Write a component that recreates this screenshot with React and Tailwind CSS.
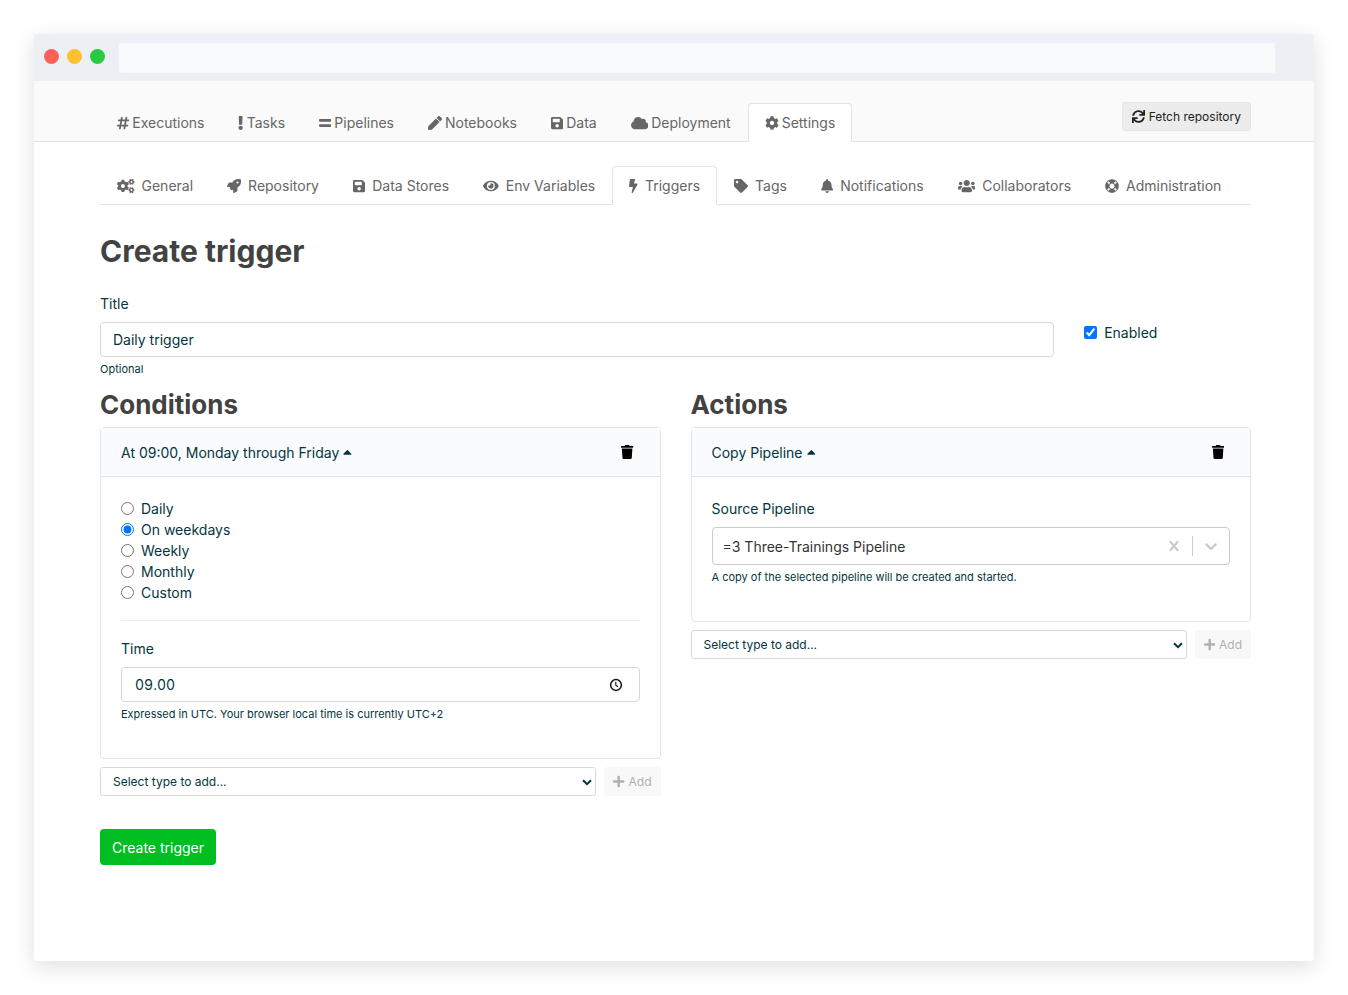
import React, { useState } from "react";
import clsx from "clsx";
import { IconContext } from "react-icons";
import {
  FaBell,
  FaBolt,
  FaCaretUp,
  FaCloud,
  FaCog,
  FaCogs,
  FaEquals,
  FaExclamation,
  FaEye,
  FaHashtag,
  FaLifeRing,
  FaPen,
  FaPlus,
  FaRocket,
  FaSave,
  FaSync,
  FaTag,
  FaTrash,
  FaUsers,
} from "react-icons/fa";

const mainTabs = [
  { name: "Executions", icon: FaHashtag },
  { name: "Tasks", icon: FaExclamation },
  { name: "Pipelines", icon: FaEquals },
  { name: "Notebooks", icon: FaPen },
  { name: "Data", icon: FaSave },
  { name: "Deployment", icon: FaCloud },
  { name: "Settings", icon: FaCog },
];

const settingsTabs = [
  { name: "General", icon: FaCogs },
  { name: "Repository", icon: FaRocket },
  { name: "Data Stores", icon: FaSave },
  { name: "Env Variables", icon: FaEye },
  { name: "Triggers", icon: FaBolt },
  { name: "Tags", icon: FaTag },
  { name: "Notifications", icon: FaBell },
  { name: "Collaborators", icon: FaUsers },
  { name: "Administration", icon: FaLifeRing },
];

const schedules = ["Daily", "On weekdays", "Weekly", "Monthly", "Custom"];

// size "auto" lets every icon keep the width of its own viewBox
const iconSettings = { size: "auto" };

function Tabs({ tabs, active, gap, label }) {
  return (
    <nav aria-label={label} className="-mb-px flex">
      {tabs.map(({ name, icon: Icon }) => (
        <a
          key={name}
          href="#"
          className={clsx(
            "flex h-[39px] items-center rounded-t border px-4 whitespace-nowrap text-[#666]",
            gap,
            name === active
              ? "border-[#dfe6ea] border-b-white bg-white"
              : "border-transparent"
          )}
        >
          <Icon className="h-3.5 w-auto" aria-hidden="true" />
          {name}
        </a>
      ))}
    </nav>
  );
}

function ChevronIcon({ className }) {
  return (
    <svg viewBox="0 0 10 7" className={className} aria-hidden="true">
      <path d="M1 1.2 5 5.2 9 1.2" fill="none" stroke="currentColor" strokeWidth="2" />
    </svg>
  );
}

function ClockIcon({ className }) {
  return (
    <svg viewBox="0 0 14 14" className={className} aria-hidden="true">
      <circle cx="7" cy="7" r="5.4" fill="none" stroke="#111" strokeWidth="1.5" />
      <path d="M6.8 3.8v3.4l2.2 1.6" fill="none" stroke="#111" strokeWidth="1.1" />
    </svg>
  );
}

function Card({ title, children }) {
  return (
    <section className="rounded border border-[#e3e6e8] bg-white">
      <header className="flex h-[49px] items-center justify-between border-b border-[#dfe3e6] bg-[#fafbfd] px-5">
        <button type="button" className="flex items-center gap-1">
          {title}
          <FaCaretUp className="h-3.5 w-auto" aria-hidden="true" />
        </button>
        <button type="button" aria-label="Delete" className="px-1.5 text-black">
          <FaTrash className="h-3.5 w-auto" />
        </button>
      </header>
      <div className="px-5 pt-[21px] pb-5">{children}</div>
    </section>
  );
}

function AddRow({ label }) {
  return (
    <div className="mt-2 flex gap-2 text-xs">
      <div className="relative flex-1">
        <select
          aria-label={label}
          className="h-[29px] w-full appearance-none rounded-[3px] border border-[#d3dade] bg-white px-3"
        >
          <option>Select type to add...</option>
        </select>
        <ChevronIcon className="pointer-events-none absolute top-3 right-1 h-[7px] w-2.5" />
      </div>
      <button
        type="button"
        disabled
        className="flex h-[29px] items-center gap-1 rounded-[3px] bg-[#f8f8f8] px-[9px] text-[#b0b0b0]"
      >
        <FaPlus className="h-[13px] w-auto" aria-hidden="true" />
        Add
      </button>
    </div>
  );
}

function App() {
  const [title, setTitle] = useState("Daily trigger");
  const [enabled, setEnabled] = useState(true);
  const [schedule, setSchedule] = useState("On weekdays");
  const [time, setTime] = useState("09.00");
  const [pipeline, setPipeline] = useState("=3 Three-Trainings Pipeline");

  return (
    <IconContext.Provider value={iconSettings}>
      <div className="min-h-screen bg-white p-[34px] font-['Inter',sans-serif] text-sm leading-[21px] text-[#04363d]">
        <div className="rounded-[3px] bg-white shadow-[0_6px_22px_rgba(0,0,0,0.13)]">
          {/* Browser bar */}
          <div className="flex h-[47px] items-center rounded-t-[3px] bg-[#ecf0f5] pr-[39px] pl-2.5">
            <div className="mb-0.5 flex gap-2">
              <span className="size-[15px] rounded-full bg-[#ff6058]" />
              <span className="size-[15px] rounded-full bg-[#ffc02e]" />
              <span className="size-[15px] rounded-full bg-[#28ca41]" />
            </div>
            <div className="ml-3.5 h-[30px] flex-1 rounded-[2px] bg-[#f9fafc]" />
          </div>

          {/* Project navigation */}
          <div className="flex items-end justify-between border-b border-[#dfe3e6] bg-[#fafafa] pt-[21px] pr-[63px] pl-[66px]">
            <Tabs tabs={mainTabs} active="Settings" gap="gap-[3px]" label="Project" />
            <button
              type="button"
              className="mb-2.5 flex h-[29px] items-center gap-1 rounded-[3px] border border-[#e6e6e6] bg-[#ececec] px-[9px] text-xs text-[#222]"
            >
              <FaSync className="h-[13px] w-auto" aria-hidden="true" />
              Fetch repository
            </button>
          </div>

          <main className="pt-6 pr-[63px] pb-24 pl-[66px]">
            <div className="border-b border-[#dfe3e6]">
              <Tabs tabs={settingsTabs} active="Triggers" gap="gap-[7px]" label="Settings" />
            </div>

            <form onSubmit={(e) => e.preventDefault()}>
              <h1 className="mt-7 text-3xl leading-9 font-bold text-[#424242]">
                Create trigger
              </h1>

              <div className="mt-6 grid grid-cols-12 gap-x-[30px]">
                <div className="col-span-10">
                  <label htmlFor="title" className="block">
                    Title
                  </label>
                  <input
                    id="title"
                    type="text"
                    value={title}
                    onChange={(e) => setTitle(e.target.value)}
                    className="mt-2 block h-[35px] w-full rounded border border-[#d3dade] px-3"
                  />
                  <p className="mt-[3px] text-[11px] leading-[18px]">Optional</p>
                </div>
                <div className="col-span-2 pt-[29px]">
                  <label className="flex items-center gap-[7px]">
                    <input
                      type="checkbox"
                      checked={enabled}
                      onChange={(e) => setEnabled(e.target.checked)}
                      className="size-[13px] accent-[#0075ff]"
                    />
                    Enabled
                  </label>
                </div>
              </div>

              <div className="mt-3 grid grid-cols-2 gap-x-[30px]">
                <div>
                  <h2 className="mb-2 text-[26px] leading-[29px] font-bold text-[#424242]">
                    Conditions
                  </h2>
                  <Card title="At 09:00, Monday through Friday">
                    <fieldset aria-label="Schedule">
                      {schedules.map((name) => (
                        <label key={name} className="flex items-center gap-[7px]">
                          <input
                            type="radio"
                            name="schedule"
                            checked={schedule === name}
                            onChange={() => setSchedule(name)}
                            className="size-[13px] accent-[#0075ff]"
                          />
                          {name}
                        </label>
                      ))}
                    </fieldset>
                    <hr className="my-[17px] border-[#e8eaec]" />
                    <label htmlFor="time" className="block">
                      Time
                    </label>
                    <div className="relative mt-2">
                      <input
                        id="time"
                        type="text"
                        value={time}
                        onChange={(e) => setTime(e.target.value)}
                        className="block h-[35px] w-full rounded border border-[#d3dade] px-[13px] tabular-nums"
                      />
                      <ClockIcon className="pointer-events-none absolute top-[11px] right-[17px] size-3.5" />
                    </div>
                    <p className="mt-[3px] mb-[15px] text-[11px] leading-[18px]">
                      Expressed in UTC. Your browser local time is currently UTC+2
                    </p>
                  </Card>
                  <AddRow label="Condition type" />
                </div>

                <div>
                  <h2 className="mb-2 text-[26px] leading-[29px] font-bold text-[#424242]">
                    Actions
                  </h2>
                  <Card title="Copy Pipeline">
                    <label htmlFor="pipeline" className="block">
                      Source Pipeline
                    </label>
                    <div className="mt-2 flex h-[38px] items-center rounded border border-[#ccc] bg-white text-[#ccc]">
                      <input
                        id="pipeline"
                        role="combobox"
                        aria-expanded="false"
                        value={pipeline}
                        onChange={(e) => setPipeline(e.target.value)}
                        className="min-w-0 flex-1 px-2.5 text-[#333]"
                      />
                      <button
                        type="button"
                        aria-label="Clear"
                        onClick={() => setPipeline("")}
                        className="px-2"
                      >
                        <svg viewBox="0 0 20 20" className="size-5 fill-current">
                          <path d="M14.348 14.849c-0.469 0.469-1.229 0.469-1.697 0l-2.651-3.030-2.651 3.029c-0.469 0.469-1.229 0.469-1.697 0-0.469-0.469-0.469-1.229 0-1.697l2.758-3.15-2.759-3.152c-0.469-0.469-0.469-1.228 0-1.697s1.228-0.469 1.697 0l2.652 3.031 2.651-3.031c0.469-0.469 1.228-0.469 1.697 0s0.469 1.229 0 1.697l-2.758 3.152 2.758 3.15c0.469 0.469 0.469 1.229 0 1.698z" />
                        </svg>
                      </button>
                      <span className="h-5 w-px bg-[#ccc]" />
                      <button type="button" aria-label="Open" className="px-2">
                        <svg viewBox="0 0 20 20" className="size-5 fill-current">
                          <path d="M4.516 7.548c0.436-0.446 1.043-0.481 1.576 0l3.908 3.747 3.908-3.747c0.533-0.481 1.141-0.446 1.574 0 0.436 0.445 0.408 1.197 0 1.615-0.406 0.418-4.695 4.502-4.695 4.502-0.217 0.223-0.502 0.335-0.787 0.335s-0.57-0.112-0.789-0.335c0 0-4.287-4.084-4.695-4.502s-0.436-1.17 0-1.615z" />
                        </svg>
                      </button>
                    </div>
                    <p className="mt-[3px] mb-[15px] text-[11px] leading-[18px]">
                      A copy of the selected pipeline will be created and started.
                    </p>
                  </Card>
                  <AddRow label="Action type" />
                </div>
              </div>

              <button
                type="submit"
                className="mt-[33px] h-9 rounded bg-[#00bd22] px-3 text-white"
              >
                Create trigger
              </button>
            </form>
          </main>
        </div>
      </div>
    </IconContext.Provider>
  );
}

export default App;
